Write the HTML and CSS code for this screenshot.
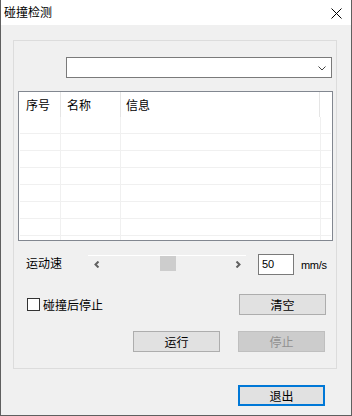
FILE: index.html
```html
<!DOCTYPE html>
<html lang="zh-CN">
<head>
    <meta charset="UTF-8">
    <title>碰撞检测</title>
    <link rel="stylesheet" href="styles.css">
</head>
<body>
    <div class="window">
        <div class="titlebar">
            <span class="title">碰撞检测</span>
            <svg class="close-icon" width="11" height="11" viewBox="0 0 11 11">
                <path d="M0.5 0.5 L10.5 10.5 M10.5 0.5 L0.5 10.5" stroke="#000" stroke-width="1" fill="none"/>
            </svg>
        </div>
        <div class="client">
            <div class="group">
                <div class="combo">
                    <svg width="8" height="5" viewBox="0 0 8 5">
                        <path d="M0.5 0.5 L4 4 L7.5 0.5" stroke="#444" stroke-width="1" fill="none"/>
                    </svg>
                </div>

                <div class="list">
                    <div class="list-header">
                        <div class="col col-id">序号</div>
                        <div class="col col-name">名称</div>
                        <div class="col col-info">信息</div>
                    </div>
                    <!-- empty rows, grid lines only -->
                    <div class="list-row"><div class="cell c1"></div><div class="cell c2"></div><div class="cell c3"></div></div>
                    <div class="list-row"><div class="cell c1"></div><div class="cell c2"></div><div class="cell c3"></div></div>
                    <div class="list-row"><div class="cell c1"></div><div class="cell c2"></div><div class="cell c3"></div></div>
                    <div class="list-row"><div class="cell c1"></div><div class="cell c2"></div><div class="cell c3"></div></div>
                    <div class="list-row"><div class="cell c1"></div><div class="cell c2"></div><div class="cell c3"></div></div>
                    <div class="list-row"><div class="cell c1"></div><div class="cell c2"></div><div class="cell c3"></div></div>
                    <div class="list-row"><div class="cell c1"></div><div class="cell c2"></div><div class="cell c3"></div></div>
                    <div class="list-row"><div class="cell c1"></div><div class="cell c2"></div><div class="cell c3"></div></div>
                </div>

                <div class="speed-row">
                    <span class="speed-label">运动速</span>
                    <div class="scroll">
                        <div class="arrow">
                            <svg width="6" height="7" viewBox="0 0 6 7"><path d="M4.5 0.5 L1.5 3.5 L4.5 6.5" stroke="#606060" stroke-width="2" fill="none"/></svg>
                        </div>
                        <div class="track"><div class="thumb"></div></div>
                        <div class="arrow">
                            <svg width="6" height="7" viewBox="0 0 6 7"><path d="M1.5 0.5 L4.5 3.5 L1.5 6.5" stroke="#606060" stroke-width="2" fill="none"/></svg>
                        </div>
                    </div>
                    <div class="edit">50</div>
                    <span class="unit">mm/s</span>
                </div>

                <div class="check-row">
                    <span class="checkbox"></span>
                    <span class="check-label">碰撞后停止</span>
                    <button class="btn btn-clear">清空</button>
                </div>

                <div class="run-row">
                    <button class="btn">运行</button>
                    <button class="btn btn-disabled" disabled>停止</button>
                </div>
            </div>

            <div class="exit-row">
                <button class="btn btn-default">退出</button>
            </div>
        </div>
    </div>
</body>
</html>
```

FILE: styles.css
```css
body {
    margin: 0;
    font-family: "Noto Sans CJK SC", "Microsoft YaHei", sans-serif;
    font-size: 12px;
    color: #000;
}
.window {
    width: 352px;
    height: 416px;
    box-sizing: border-box;
    border: 1px solid #5f5f5f;
    border-top: none;
    background: #f0f0f0;
    display: flex;
    flex-direction: column;
}
.titlebar {
    height: 25px;
    background: #fff;
    display: flex;
    align-items: center;
    justify-content: space-between;
    padding: 0 9px 0 3px;
}
.title {
    line-height: 16px;
    margin-top: -1px;
}
.close-icon {
    margin-top: 2px;
}
.client {
    flex: 1;
    padding: 15px 0 0 12px;
}
.group {
    width: 324px;
    height: 329px;
    box-sizing: border-box;
    border: 1px solid #dcdcdc;
}
.combo {
    margin: 16px 0 0 52px;
    width: 266px;
    height: 21px;
    box-sizing: border-box;
    border: 1px solid #7a7a7a;
    background: #fff;
    display: flex;
    align-items: center;
    justify-content: flex-end;
    padding: 1px 5px 0 0;
}
.list {
    margin: 13px 0 0 4px;
    width: 315px;
    height: 150px;
    box-sizing: border-box;
    border: 1px solid #828790;
    background: #fff;
    overflow: hidden;
}
.list-header {
    display: flex;
    height: 25px;
}
.col {
    box-sizing: border-box;
    border-right: 1px solid #e5e5e5;
    line-height: 25px;
    padding-left: 6px;
}
.col-id {
    width: 42px;
    padding-left: 7px;
}
.col-name {
    width: 60px;
}
.col-info {
    width: 199px;
    padding-left: 5px;
}
.list-row {
    display: flex;
    height: 17px;
    box-sizing: border-box;
    border-bottom: 1px solid #f0f0f0;
    margin: 0 1px 0 1px;
}
.cell {
    box-sizing: border-box;
    border-right: 1px solid #f0f0f0;
}
.c1 {
    width: 41px;
}
.c2 {
    width: 60px;
}
.c3 {
    width: 200px;
}
.speed-row {
    margin-top: 13px;
    height: 21px;
    display: flex;
    align-items: center;
}
.speed-label {
    margin-left: 12px;
    width: 36px;
    line-height: 16px;
    margin-top: -3px;
}
.scroll {
    align-self: flex-start;
    margin: 1px 0 0 26px;
    width: 158px;
    height: 16px;
    box-sizing: border-box;
    border-top: 1px solid #fff;
    display: flex;
}
.arrow {
    width: 17px;
    display: flex;
    align-items: center;
    justify-content: center;
    padding-top: 1px;
}
.track {
    flex: 1;
}
.thumb {
    width: 16px;
    height: 15px;
    margin-left: 55px;
    background: #cdcdcd;
}
.edit {
    margin-left: 12px;
    width: 36px;
    height: 21px;
    box-sizing: border-box;
    border: 1px solid #7a7a7a;
    background: #fff;
    font-family: "Liberation Sans", Arial, sans-serif;
    font-size: 11px;
    line-height: 19px;
    padding-left: 3px;
}
.unit {
    margin-left: 7px;
    font-family: "Liberation Sans", Arial, sans-serif;
    font-size: 11px;
    letter-spacing: -0.3px;
}
.check-row {
    margin-top: 19px;
    height: 21px;
    display: flex;
    align-items: center;
}
.checkbox {
    margin-left: 13px;
    width: 13px;
    height: 13px;
    box-sizing: border-box;
    border: 1px solid #333;
    background: #fff;
}
.check-label {
    margin-left: 3px;
    line-height: 16px;
}
.btn {
    width: 87px;
    height: 21px;
    box-sizing: border-box;
    border: 1px solid #adadad;
    background: #e1e1e1;
    font-family: "Noto Sans CJK SC", "Microsoft YaHei", sans-serif;
    font-size: 12px;
    line-height: 17px;
    color: #000;
    padding: 0;
}
.btn-clear {
    margin-left: auto;
    margin-right: 10px;
}
.run-row {
    margin-top: 16px;
    display: flex;
    justify-content: flex-end;
    gap: 18px;
    padding-right: 11px;
}
.btn-disabled {
    background: #cccccc;
    border-color: #bfbfbf;
    color: #919191;
}
.exit-row {
    margin-top: 16px;
    display: flex;
    justify-content: flex-end;
    padding-right: 26px;
}
.btn-default {
    border: 2px solid #0078d7;
}
```
